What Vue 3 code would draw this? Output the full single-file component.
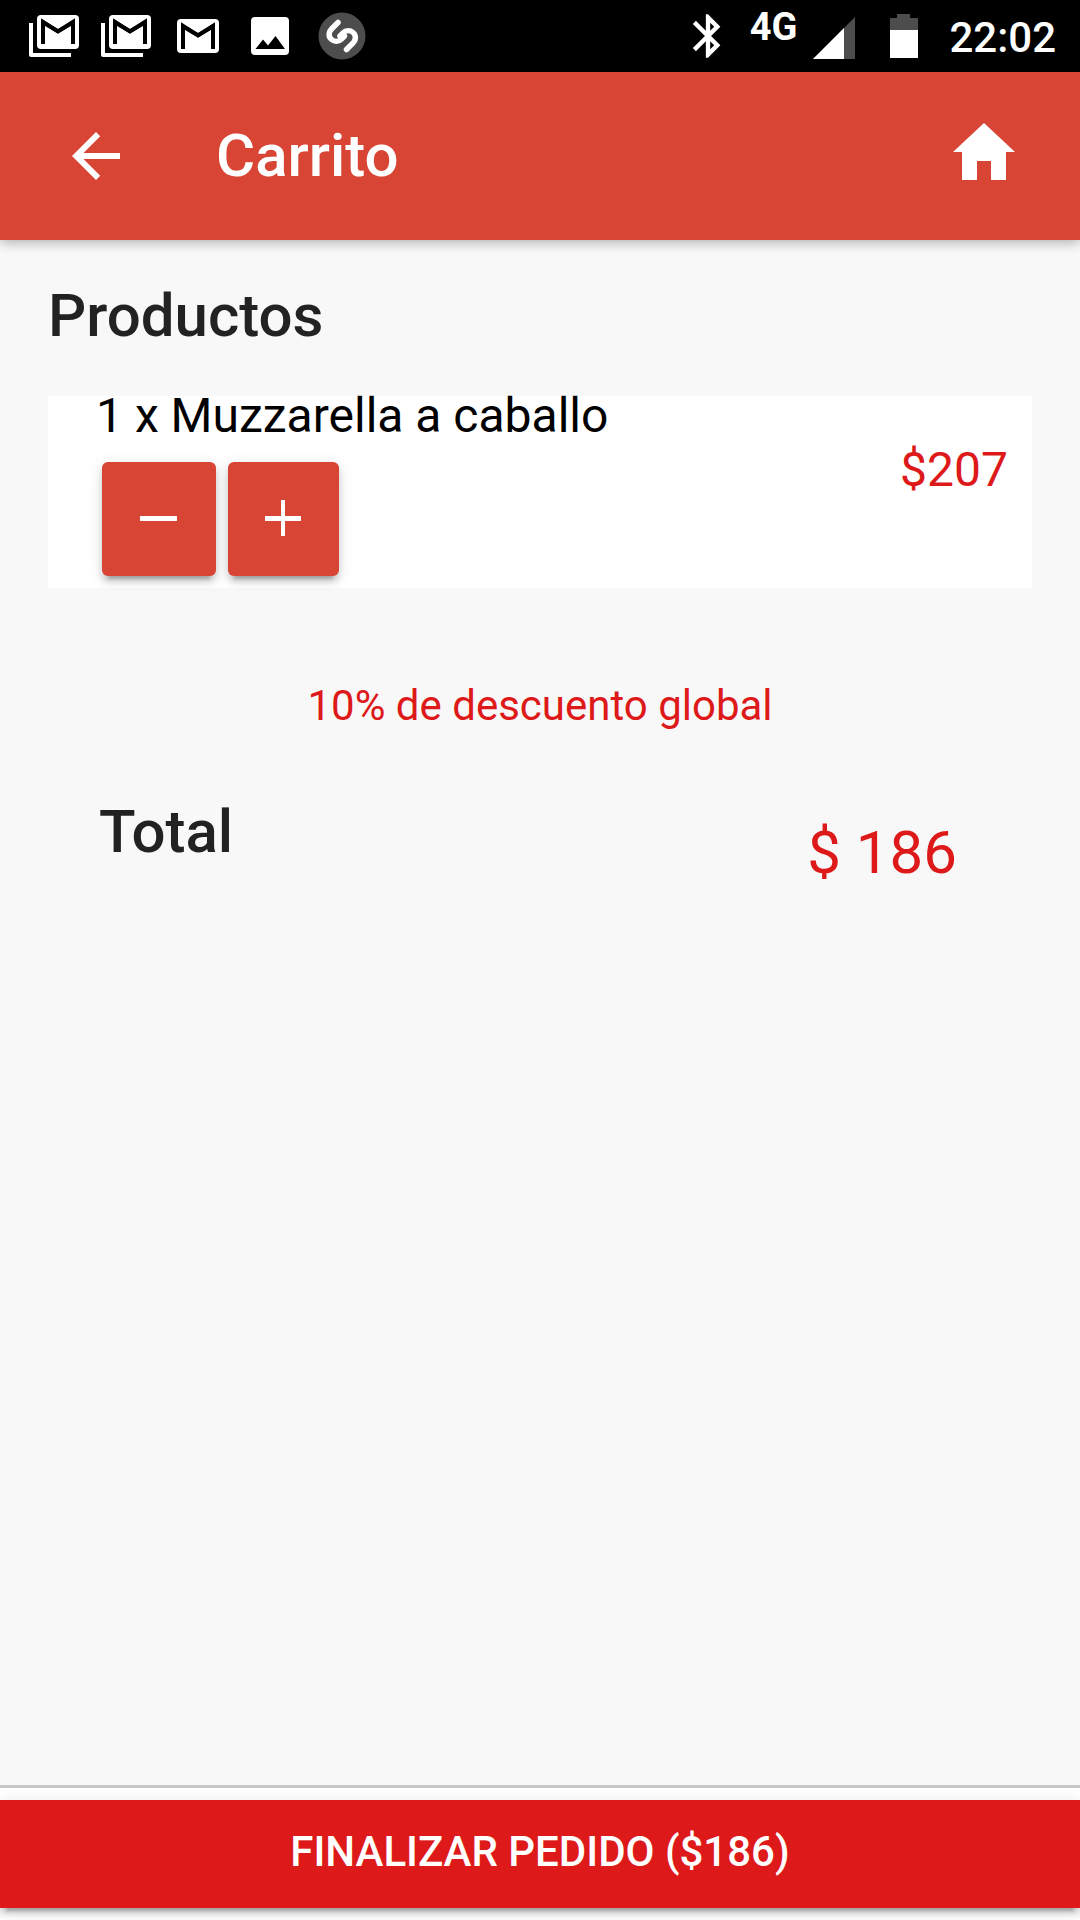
<script setup>
import { ref, computed } from 'vue'

const item = ref({ name: 'Muzzarella a caballo', quantity: 1, unitPrice: 207 })
const discount = 10

const subtotal = computed(() => item.value.quantity * item.value.unitPrice)
const total = computed(() => Math.floor(subtotal.value * (1 - discount / 100)))

function remove() {
  if (item.value.quantity > 0) item.value.quantity--
}
function add() {
  item.value.quantity++
}
</script>

<template>
  <div class="page">
    <div class="status">
      <div class="notifications">
        <svg v-for="n in 2" :key="n" class="note" viewBox="0 0 72 72" aria-hidden="true">
          <path d="M11 23h4v30h38v4H13a2 2 0 0 1-2-2z" fill="#fff" />
          <rect x="19" y="15" width="42" height="34" rx="4" fill="#fff" />
          <path d="M25 44V22l15 9.500 15-9.500V44" fill="none" stroke="#000" stroke-width="4" />
          <path d="M23 19l17 10 17-10v4.500L40 33.500 23 23.500z" fill="#000" />
        </svg>
        <svg class="note" viewBox="0 0 72 72" aria-hidden="true">
          <rect x="15" y="19" width="42" height="34" rx="4" fill="#fff" />
          <path d="M21 49V26l15 9.500 15-9.500V49" fill="none" stroke="#000" stroke-width="4" />
          <path d="M19 23l17 10 17-10v4.500L36 37.500 19 27.500z" fill="#000" />
        </svg>
        <svg class="note" viewBox="0 0 72 72" aria-hidden="true">
          <rect x="17" y="17" width="38" height="38" rx="4" fill="#fff" />
          <path d="M21.500 49l7.500-9.500 5 6 7.500-9.500L51 49z" fill="#000" />
        </svg>
        <svg class="note" viewBox="0 0 72 72" aria-hidden="true">
          <circle cx="36" cy="36" r="23.500" fill="#4d4d4d" />
          <path
            d="M32 22.500l-6 6C22 32.500 22.500 37 25.500 39.500 28.500 42 32.500 42 35.500 39L38.500 36M40.500 49.500l6-6C50.500 39.500 50 35 47 32.500 44 30 40 30 37 33L34 36"
            fill="none" stroke="#fff" stroke-width="5.500" stroke-linecap="round"
          />
        </svg>
      </div>
      <div class="system">
        <svg class="bluetooth" viewBox="0 0 24 24" aria-hidden="true">
          <path
            fill="#fff"
            d="M17.710 7.710L12 2h-1v7.590L6.410 5 5 6.410 10.590 12 5 17.590 6.410 19 11 14.410V22h1l5.710-5.710-4.300-4.290 4.300-4.290zM13 5.830l1.880 1.880L13 9.590V5.830zm1.880 10.460L13 18.170v-3.760l1.880 1.880z"
          />
        </svg>
        <span class="network">4G</span>
        <svg class="signal" viewBox="0 0 42 72" aria-hidden="true">
          <path d="M0 59L42 17V59z" fill="#4d4d4d" />
          <path d="M0 59L31 28V59z" fill="#fff" />
        </svg>
        <svg class="battery" viewBox="0 0 28 72" aria-hidden="true">
          <path d="M0 18h7v-4h13v4h8v13H0z" fill="#4d4d4d" />
          <path d="M0 30h28v28H0z" fill="#fff" />
        </svg>
        <time class="clock">22:02</time>
      </div>
    </div>

    <header class="toolbar">
      <button class="icon-button" type="button" aria-label="Volver">
        <svg width="72" height="72" viewBox="0 0 24 24" aria-hidden="true">
          <path fill="#fff" d="M20 11H7.830l5.590-5.590L12 4l-8 8 8 8 1.410-1.410L7.830 13H20v-2z" />
        </svg>
      </button>
      <h1>Carrito</h1>
      <button class="icon-button" type="button" aria-label="Inicio">
        <svg width="72" height="72" viewBox="0 0 72 72" aria-hidden="true">
          <path fill="#fff" d="M36 3L67 32H58V60H43V41H29V60H14V32H5z" />
        </svg>
      </button>
    </header>

    <main>
      <h2>Productos</h2>
      <article class="item">
        <div class="details">
          <p class="name">{{ item.quantity }} x {{ item.name }}</p>
          <div class="quantity">
            <button type="button" aria-label="Quitar uno" @click="remove">
              <svg width="42" height="42" viewBox="0 0 42 42" aria-hidden="true">
                <path fill="#fff" d="M2 18h37v5H2z" />
              </svg>
            </button>
            <button type="button" aria-label="Agregar uno" @click="add">
              <svg width="39" height="42" viewBox="0 0 39 42" aria-hidden="true">
                <path fill="#fff" d="M17 2h4v16h16v5H21v15h-4V23H1v-5h16z" />
              </svg>
            </button>
          </div>
        </div>
        <p class="price">${{ subtotal }}</p>
      </article>
      <p class="discount">{{ discount }}% de descuento global</p>
      <section class="total">
        <h2>Total</h2>
        <p>$ {{ total }}</p>
      </section>
    </main>

    <footer>
      <button class="checkout" type="button">FINALIZAR PEDIDO (${{ total }})</button>
    </footer>
  </div>
</template>

<style>
body {
  margin: 0;
}
</style>

<style scoped>
.page {
  display: flex;
  flex-direction: column;
  min-height: 100vh;
  background: #f8f8f8;
  color: #000;
  font-family: Roboto, "Liberation Sans", sans-serif;
}

h1,
h2,
p {
  margin: 0;
}

h1,
h2 {
  font-size: 60px;
  font-weight: 500;
  line-height: 72px;
}

button {
  border: 0;
  color: #fff;
  font-family: inherit;
}

svg {
  display: block;
}

.status {
  display: flex;
  justify-content: space-between;
  height: 72px;
  padding: 0 24px 0 18px;
  background: #000;
  color: #fff;
}

.notifications,
.system {
  display: flex;
}

.note {
  width: 72px;
  height: 72px;
}

.bluetooth {
  width: 52px;
  height: 72px;
}

.network {
  margin: 0 16px;
  font-size: 38px;
  font-weight: 700;
  line-height: 54px;
}

.signal {
  width: 42px;
  height: 72px;
}

.battery {
  width: 28px;
  height: 72px;
  margin: 0 31px 0 35px;
}

.clock {
  font-size: 42px;
  font-weight: 500;
  line-height: 76px;
}

.toolbar {
  display: flex;
  align-items: center;
  height: 168px;
  padding: 0 60px;
  background: #d84534;
  color: #fff;
  box-shadow: 0 2px 12px rgba(0, 0, 0, 0.32);
}

.toolbar h1 {
  flex: 1;
  margin-left: 84px;
  line-height: 74px;
}

.icon-button {
  padding: 0;
  background: none;
}

main {
  flex: 1;
  padding: 40px 48px;
}

h2 {
  color: #222;
}

.item {
  display: flex;
  justify-content: space-between;
  margin-top: 44px;
  padding: 0 24px 12px 48px;
  background: #fff;
}

.name {
  font-size: 48px;
  line-height: 40px;
}

.quantity {
  display: flex;
  gap: 12px;
  margin: 26px 0 0 6px;
}

.quantity button {
  height: 114px;
  padding: 0 36px;
  border-radius: 6px;
  background: #d84534;
  box-shadow: 0 6px 6px rgba(0, 0, 0, 0.14), 0 9px 3px -6px rgba(0, 0, 0, 0.2), 0 3px 15px rgba(0, 0, 0, 0.12);
}

.price {
  margin-top: 44px;
  color: #dd1919;
  font-size: 48px;
  line-height: 60px;
}

.discount {
  margin-top: 88px;
  color: #dd1919;
  font-size: 42px;
  line-height: 60px;
  text-align: center;
}

.total {
  display: flex;
  justify-content: space-between;
  margin-top: 60px;
  padding: 0 75px 0 51px;
}

.total p {
  margin-top: 21px;
  color: #dd1919;
  font-size: 60px;
  line-height: 72px;
}

footer {
  padding: 12px 0;
  border-top: 3px solid #c8c8c8;
  background: #fff;
}

.checkout {
  display: block;
  width: 100%;
  height: 108px;
  padding: 0 0 6px;
  background: #dd1919;
  font-size: 42px;
  font-weight: 500;
  box-shadow: 0 6px 6px rgba(0, 0, 0, 0.14), 0 9px 3px -6px rgba(0, 0, 0, 0.2), 0 3px 15px rgba(0, 0, 0, 0.12);
}
</style>
